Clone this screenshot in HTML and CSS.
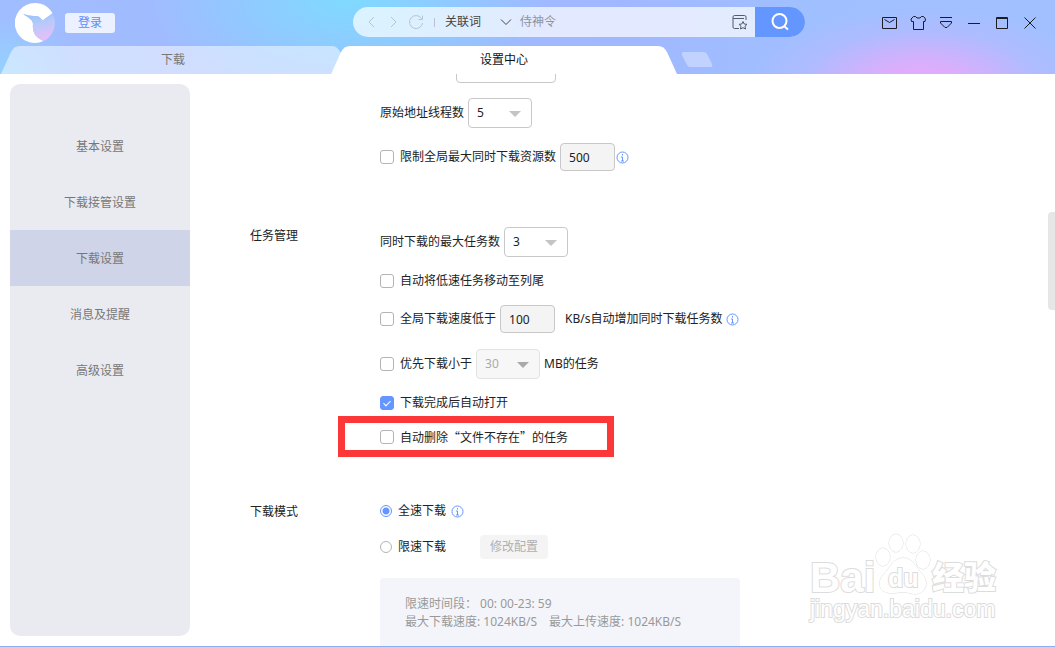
FILE: index.html
```html
<!DOCTYPE html>
<html lang="zh-CN">
<head>
<meta charset="utf-8">
<title>设置中心</title>
<link rel="stylesheet" href="styles.css">
</head>
<body>
<div class="app">
  <header class="header">
    <div class="topbar">
      <svg class="logo" viewBox="0 0 40 40" aria-hidden="true">
        <defs>
          <linearGradient id="wing" x1="0" y1="0" x2="0.3" y2="1">
            <stop offset="0" stop-color="#8fc4fb"/>
            <stop offset="0.5" stop-color="#b9c9fb"/>
            <stop offset="1" stop-color="#e2c0f7"/>
          </linearGradient>
        </defs>
        <path d="M20 0C28 0 34 4 37.500 10.300L27.500 17.500C25 13.500 23 12.500 19 13C15 13 12 12 8 11C13 14 18 17 18 21C17 30 21 35 28.500 38A20 20 0 1 1 20 0Z" fill="#fff"/>
        <path d="M8 11C12 12 15 13 19 13C23 12.500 25 13.500 27.500 17.500L37.500 10.300A20 20 0 0 1 28.500 38C21 35 17 30 18 21C18 17 13 14 8 11Z" fill="url(#wing)"/>
      </svg>
      <button class="login" type="button">登录</button>
      <form class="search">
        <button class="nav" type="button" aria-label="后退"><svg width="18" height="16" viewBox="0 0 18 16"><path d="M11 3L6 8L11 13"/></svg></button>
        <button class="nav" type="button" aria-label="前进"><svg width="18" height="16" viewBox="0 0 18 16"><path d="M6 3L11 8L6 13"/></svg></button>
        <button class="nav" type="button" aria-label="刷新"><svg width="18" height="16" viewBox="0 0 18 16"><path d="M15.500 9A6.500 6.500 0 1 1 14.500 4.500M15.500 1.500V5.500H11.500"/></svg></button>
        <span class="divider"></span>
        <span class="engine">
          <select aria-label="搜索类型"><option>关联词</option></select>
          <svg width="12" height="8" viewBox="0 0 12 8"><path d="M1 1.500L6 6.500L11 1.500"/></svg>
        </span>
        <input class="query" type="text" placeholder="侍神令" aria-label="搜索">
        <button class="fav" type="button" aria-label="收藏"><svg width="18" height="18" viewBox="0 0 18 18"><path d="M8 15.500H3.500Q2 15.500 2 14V4Q2 2.500 3.500 2.500H13.500Q15 2.500 15 4V7M2 5.500H13"/><path d="M12 8.500L13.200 11L16 11.300L14 13.200L14.500 16L12 14.700L9.500 16L10 13.200L8 11.300L10.800 11Z"/></svg></button>
        <button class="go" type="submit" aria-label="搜索"><svg width="20" height="20" viewBox="0 0 20 20"><circle cx="9.500" cy="9" r="7"/><path d="M14.500 14.500L18 17.500"/></svg></button>
      </form>
      <nav class="window-tools">
        <button type="button" aria-label="消息"><svg width="16" height="16" viewBox="0 0 16 16"><path d="M.5 2.500H14.500V13.500H.5ZM2.500 4.500L7.500 7.500L12.500 4.500"/></svg></button>
        <button type="button" aria-label="皮肤"><svg width="16" height="16" viewBox="0 0 16 16"><path d="M5.500 1.500L3.500 1.500L1 4L1.500 6.500H3.500V14.500H13.500V6.500H15L15.500 4L13.500 1.500H11.500L10 3H7Z"/></svg></button>
        <button type="button" aria-label="菜单"><svg width="16" height="16" viewBox="0 0 16 16"><path d="M2 2.500H14M2.500 6.500H13.500V8L9 12.500H7L2.500 8Z"/></svg></button>
        <button type="button" aria-label="最小化"><svg width="16" height="16" viewBox="0 0 16 16"><path d="M2 8.500H14"/></svg></button>
        <button type="button" aria-label="最大化"><svg width="16" height="16" viewBox="0 0 16 16"><path d="M2.500 2.500H13.500V13.500H2.500ZM2 3.500H14"/></svg></button>
        <button type="button" aria-label="关闭"><svg width="16" height="16" viewBox="0 0 16 16"><path d="M2.500 2.500L13.500 13.500M13.500 2.500L2.500 13.500"/></svg></button>
      </nav>
    </div>
    <div class="tabs">
      <button class="tab" type="button">
        <svg viewBox="0 0 346 28" preserveAspectRatio="none"><path d="M1 28L11 6Q14 0 19 0H332Q338 0 341 8L331 28Z"/></svg>
        <span>下载</span>
      </button>
      <button class="tab tab-active" type="button">
        <svg viewBox="0 0 346 28" preserveAspectRatio="none"><path d="M0 28L10 6Q13 0 19 0H327Q333 0 336 6L346 28Z"/></svg>
        <span>设置中心</span>
      </button>
      <button class="tab-new" type="button" aria-label="新标签"><svg width="32" height="16" viewBox="0 0 32 16"><path d="M3 0H23Q25 0 26 2L31 12Q32 15 30 15H9Q7 15 6 13L1 3Q0 0 3 0Z"/></svg></button>
    </div>
  </header>

  <div class="body">
    <nav class="sidebar">
      <a href="#basic">基本设置</a>
      <a href="#takeover">下载接管设置</a>
      <a href="#download" class="current">下载设置</a>
      <a href="#notice">消息及提醒</a>
      <a href="#advanced">高级设置</a>
    </nav>

    <main class="content">
      <section class="section">
        <h2></h2>
        <div class="rows">
          <div class="row row-indent"><span class="select select-wide"><select aria-label="选项"><option></option></select></span></div>
          <div class="row"><label for="threads">原始地址线程数</label><span class="select"><select id="threads"><option>5</option></select></span></div>
          <div class="row">
            <label class="check"><input type="checkbox">限制全局最大同时下载资源数</label>
            <input class="field" type="text" value="500" aria-label="资源数">
            <svg class="info" viewBox="0 0 13 13"><circle cx="6.500" cy="6.500" r="5.500"/><path d="M6.500 3V4.500M5 6H6.500V10M5 10H8"/></svg>
          </div>
        </div>
      </section>

      <section class="section">
        <h2>任务管理</h2>
        <div class="rows">
          <div class="row"><label for="tasks">同时下载的最大任务数</label><span class="select"><select id="tasks"><option>3</option></select></span></div>
          <div class="row"><label class="check"><input type="checkbox">自动将低速任务移动至列尾</label></div>
          <div class="row">
            <label class="check"><input type="checkbox">全局下载速度低于</label>
            <input class="field" type="text" value="100" aria-label="速度">
            <span class="unit">KB/s自动增加同时下载任务数</span>
            <svg class="info" viewBox="0 0 13 13"><circle cx="6.500" cy="6.500" r="5.500"/><path d="M6.500 3V4.500M5 6H6.500V10M5 10H8"/></svg>
          </div>
          <div class="row">
            <label class="check"><input type="checkbox">优先下载小于</label>
            <span class="select select-off"><select disabled aria-label="大小"><option>30</option></select></span>
            <span>MB的任务</span>
          </div>
          <div class="row"><label class="check"><input type="checkbox" checked>下载完成后自动打开</label></div>
          <div class="row row-marked"><label class="check cjk"><input type="checkbox">自动删除“文件不存在”的任务</label></div>
        </div>
      </section>

      <section class="section">
        <h2>下载模式</h2>
        <div class="rows">
          <div class="row">
            <label class="radio"><input type="radio" name="mode" checked>全速下载</label>
            <svg class="info" viewBox="0 0 13 13"><circle cx="6.500" cy="6.500" r="5.500"/><path d="M6.500 3V4.500M5 6H6.500V10M5 10H8"/></svg>
          </div>
          <div class="row">
            <label class="radio"><input type="radio" name="mode">限速下载</label>
            <button class="modify" type="button" disabled>修改配置</button>
          </div>
          <div class="limits">
            <p>限速时间段： 00: 00-23: 59</p>
            <p class="speeds"><span>最大下载速度: 1024KB/S</span><span>最大上传速度: 1024KB/S</span></p>
          </div>
        </div>
      </section>
    </main>
    <div class="scroll-thumb"></div>
  </div>

  <svg class="watermark" width="200" height="100" viewBox="0 0 200 100">
    <g id="mark">
      <text class="wm-latin" x="2" y="66" font-size="42">Bai</text>
      <ellipse cx="75" cy="31" rx="7" ry="9"/>
      <ellipse cx="88" cy="17" rx="7" ry="9"/>
      <ellipse cx="105" cy="18" rx="7" ry="9"/>
      <ellipse cx="115" cy="34" rx="7" ry="9"/>
      <path d="M95 32C105 32 108 41 114 48C121 55 119 67 108 68C101 68 100 66 95 66C89 66 88 68 82 67C70 66 69 55 76 48C83 41 85 32 95 32Z"/>
      <text class="wm-latin" x="80" y="61" font-size="25">du</text>
      <text class="wm-cjk" x="124" y="63" font-size="32">经验</text>
      <text class="wm-url" x="2" y="91" font-size="23">jingyan.baidu.com</text>
    </g>
  </svg>
</div>
</body>
</html>
```
FILE: styles.css
```css
*, *::before, *::after { box-sizing: border-box; }

body {
  margin: 0;
  font: 12px/16px "Noto Sans", "Noto Sans CJK SC", sans-serif;
  color: #222;
  background: #fff;
}

button, input, select { font: inherit; color: inherit; }
button { border: 0; padding: 0; background: none; }
h2, p { margin: 0; }
svg { display: block; fill: none; stroke: currentColor; }

.app {
  position: relative;
  display: flex;
  flex-direction: column;
  height: 100vh;
  border-bottom: 1px solid #8aaef2;
  overflow: hidden;
}

/* Header */
.header {
  flex: none;
  background:
    radial-gradient(ellipse 170px 75px at 920px 84px, #e9a9fa 0%, rgba(229, 171, 251, 0.8) 30%, rgba(200, 180, 255, 0.35) 70%, transparent 100%),
    radial-gradient(ellipse 200px 100px at 350px 0, #7fdaff 0%, transparent 100%),
    radial-gradient(ellipse 80px 60px at 0 74px, #94d2ff 0%, transparent 100%),
    linear-gradient(90deg, #a0bdff 0%, #a0b8ff 60%, #a0bfff 75%, #a2c0ff 100%);
}

.topbar {
  display: flex;
  align-items: center;
  height: 46px;
  padding: 0 11px 0 15px;
}

.logo { flex: none; width: 40px; height: 40px; stroke: none; }

.login {
  flex: none;
  width: 50px;
  height: 20px;
  margin-left: 10px;
  border-radius: 3px;
  background: #ecf1ff;
  color: #5c8dfa;
}

.search {
  display: flex;
  align-items: center;
  flex: 0 1 452px;
  min-width: 0;
  height: 30px;
  margin: 0 0 2px 238px;
  padding-left: 10px;
  border-radius: 15px;
  overflow: hidden;
  background: rgba(255, 255, 255, 0.7);
}

.nav { width: 22px; color: #b7c2d4; }
.divider { width: 1px; height: 9px; margin: 0 10px 0 5px; background: #b7c2d4; }

.engine { display: flex; align-items: center; color: #444; }
.engine select { width: 55px; padding: 0; border: 0; background: none; appearance: none; }

.query {
  flex: 1;
  min-width: 0;
  padding: 0;
  margin-left: 8px;
  border: 0;
  background: none;
  outline: 0;
}
.query::placeholder { color: #8d93a1; opacity: 1; }

.fav { margin-right: 6px; color: #555b68; }

.go {
  display: flex;
  align-items: center;
  justify-content: center;
  flex: none;
  width: 50px;
  height: 30px;
  background: #6496ff;
  color: #fff;
}
.go svg { stroke-width: 2; }

.window-tools { display: flex; margin-left: auto; color: #1c1c24; }
.window-tools button { display: flex; justify-content: center; width: 28px; }

/* Tabs */
.tabs { display: flex; height: 28px; }

.tab {
  position: relative;
  flex: 0 1 346px;
  min-width: 0;
  height: 28px;
  color: #777;
}
.tab svg {
  position: absolute;
  inset: 0;
  width: 100%;
  height: 100%;
  fill: rgba(255, 255, 255, 0.5);
  stroke: none;
}
.tab span { position: relative; }
.tab-active { margin-left: -15px; color: #111; }
.tab-active svg { fill: #fff; }
.tab-new { margin-left: 4px; }
.tab-new svg { fill: rgba(255, 255, 255, 0.35); stroke: none; }

/* Sidebar */
.body { position: relative; display: flex; flex: 1; min-height: 0; }

.sidebar {
  flex: none;
  width: 180px;
  margin: 10px 0 10px 10px;
  padding-top: 34px;
  border-radius: 10px;
  background: #eaebf1;
}
.sidebar a {
  display: block;
  height: 56px;
  color: #777;
  line-height: 58px;
  text-align: center;
  text-decoration: none;
}
.sidebar .current { background: #cfd4e8; }

/* Settings */
.content {
  display: flex;
  flex-direction: column;
  gap: 56px;
  flex: 1;
  min-width: 0;
  padding-left: 60px;
  overflow: hidden;
}

.section { display: flex; flex: none; }
.section:first-child { margin-top: -21px; }
.section:first-child .rows { gap: 15px; }
.section h2 { flex: none; width: 130px; font-size: 12px; font-weight: 400; line-height: 18px; }

.rows { display: flex; flex-direction: column; gap: 16px; flex: 1; }
.row { display: flex; align-items: center; gap: 4px; min-height: 16px; white-space: nowrap; }
.row-indent { padding-left: 76px; }

.cjk { font-family: "Noto Sans CJK SC", sans-serif; }

.check, .radio { display: flex; align-items: center; gap: 6px; }
.radio { margin-right: 1px; }

.check input, .radio input {
  flex: none;
  width: 14px;
  height: 14px;
  margin: 0;
  border: 1px solid #b4b4b4;
  border-radius: 3px;
  background: #fff;
  appearance: none;
}
.check input:checked { position: relative; border-color: #6496ff; background: #6496ff; }
.check input:checked::after {
  content: "";
  position: absolute;
  left: 4px;
  top: 2px;
  width: 4px;
  height: 7px;
  border: solid #fff;
  border-width: 0 1px 1px 0;
  transform: rotate(45deg);
}
.radio input { width: 12px; height: 12px; border-radius: 50%; }
.radio input:checked {
  border-color: #6496ff;
  background: radial-gradient(circle, #6496ff 3px, #fff 4px);
}

.select { position: relative; width: 64px; height: 30px; }
.select-wide { width: 100px; }
.select select {
  width: 100%;
  height: 100%;
  padding: 0 8px;
  border: 1px solid #c8c8c8;
  border-radius: 4px;
  background: #fff;
  appearance: none;
}
.select::after {
  content: "";
  position: absolute;
  right: 11px;
  top: 13px;
  border: solid transparent;
  border-width: 6px 6px 0;
  border-top-color: #c4c4c4;
}
.select-wide::after { display: none; }
.select-off select { border-color: #e2e2e2; background: #f7f7f7; color: #aaa; opacity: 1; }
.select-off::after { border-top-color: #aaa; }

.field {
  width: 55px;
  height: 28px;
  padding: 0 8px;
  border: 1px solid #c8c8c8;
  border-radius: 4px;
  background: #f4f4f4;
}
.unit { margin-left: 6px; }
.info { width: 13px; height: 13px; color: #6496ff; }
.field + .info { margin-left: -3px; }

/* Red frame around the highlighted option */
.row-marked { position: relative; min-height: 20px; }
.row-marked::after {
  content: "";
  position: absolute;
  top: -11px;
  left: -42px;
  width: 276px;
  height: 41px;
  border: 7px solid #fc3737;
  pointer-events: none;
}

.modify {
  width: 68px;
  height: 24px;
  margin-left: 29px;
  border-radius: 4px;
  background: #f4f4f4;
  color: #b0b0b0;
}

.limits {
  width: 360px;
  height: 100px;
  margin-top: 3px;
  padding: 17px 25px;
  border-radius: 4px;
  background: #f4f5fa;
  color: #999;
  line-height: 18px;
}
.speeds { display: flex; gap: 12px; white-space: nowrap; }

.scroll-thumb {
  position: absolute;
  top: 138px;
  right: 0;
  width: 7px;
  height: 98px;
  border-radius: 4px 0 0 4px;
  background: #e6e6e6;
}

/* Watermark */
.watermark {
  position: absolute;
  right: 47px;
  bottom: 20px;
  fill: #fff;
  stroke: #dcdcdc;
  stroke-width: 2px;
  paint-order: stroke;
  pointer-events: none;
  overflow: visible;
}
.watermark ellipse, .watermark path { stroke-width: 1px; }
.wm-latin { font-family: "Liberation Sans", sans-serif; font-weight: 700; }
.wm-cjk { font-family: "Noto Sans CJK SC", sans-serif; font-weight: 900; }
.wm-url { font-family: "Liberation Sans", sans-serif; }
```
